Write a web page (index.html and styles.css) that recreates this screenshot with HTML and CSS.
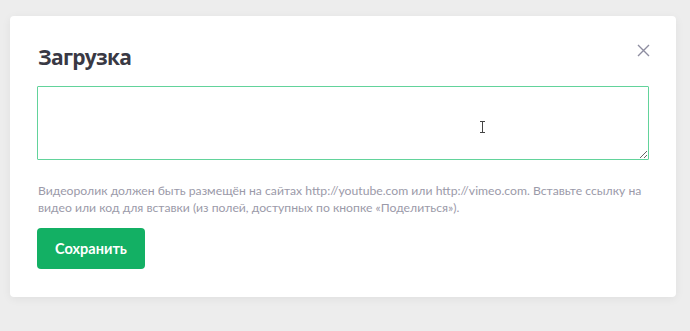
FILE: index.html
```html
<!DOCTYPE html>
<html lang="ru">
<head>
<meta charset="utf-8">
<link rel="stylesheet" href="styles.css">
</head>
<body>
<div class="page">
  <div class="modal">
    <div class="modal-head">
      <h2 class="modal-title">Загрузка</h2>
      <button class="modal-close" aria-label="Закрыть">
        <svg width="13" height="13" viewBox="0 0 13 13"><path d="M1 1L12 12M12 1L1 12" stroke="#8e8da0" stroke-width="1.4" fill="none"/></svg>
      </button>
    </div>
    <div class="field">
      <textarea class="field-input"></textarea>
      <svg class="cursor" width="7" height="12" viewBox="0 0 7 12"><path d="M1 0.5H6M3.5 0.5V11.5M1 11.5H6" stroke="#444" stroke-width="1" fill="none"/></svg>
    </div>
    <p class="hint">Видеоролик должен быть размещён на сайтах http://youtube.com или http://vimeo.com. Вставьте ссылку на видео или код для вставки (из полей, доступных по кнопке «Поделиться»).</p>
    <button class="btn-save">Сохранить</button>
  </div>
</div>
</body>
</html>
```

FILE: styles.css
```css
* { box-sizing: border-box; }
html, body { margin: 0; padding: 0; }
body {
  background: #ededed;
  width: 690px;
  height: 331px;
  overflow: hidden;
  font-family: Lato, "Noto Sans", sans-serif;
}
.page {
  padding: 16px 14px 0 10px;
}
.modal {
  background: #fff;
  border-radius: 4px;
  box-shadow: 0 2px 10px rgba(0, 0, 0, 0.06);
  padding: 27px 27px 28px 27px;
  height: 281px;
}
.modal-head {
  display: flex;
  justify-content: space-between;
  align-items: flex-start;
  height: 43px;
}
.modal-title {
  margin: 0;
  padding-left: 1px;
  font-family: "Open Sans", "Noto Sans", sans-serif;
  font-weight: 700;
  font-size: 21px;
  line-height: 28px;
  letter-spacing: -0.7px;
  color: #393944;
}
.modal-close {
  border: 0;
  background: none;
  padding: 0;
  margin: 1px -1px 0 0;
  width: 13px;
  height: 13px;
  display: flex;
}
.field {
  position: relative;
}
.field-input {
  display: block;
  width: 612px;
  height: 74px;
  border: 1px solid #62d39b;
  border-radius: 1px;
  resize: vertical;
  margin: 0;
  padding: 6px 8px;
  font-family: Lato, sans-serif;
  outline: none;
}
.cursor {
  position: absolute;
  left: 442px;
  top: 35px;
}
.hint {
  margin: 22px 0 0 1px;
  font-family: Lato, "Noto Sans", sans-serif;
  font-size: 12.2px;
  line-height: 17px;
  color: #9b9aa9;
  width: 615px;
}
.btn-save {
  margin-top: 12px;
  border: 0;
  border-radius: 4px;
  background: #13b064;
  color: #fff;
  font-family: Lato, "Noto Sans", sans-serif;
  font-weight: 700;
  font-size: 14.5px;
  width: 108px;
  height: 41px;
  padding: 0;
}
```
